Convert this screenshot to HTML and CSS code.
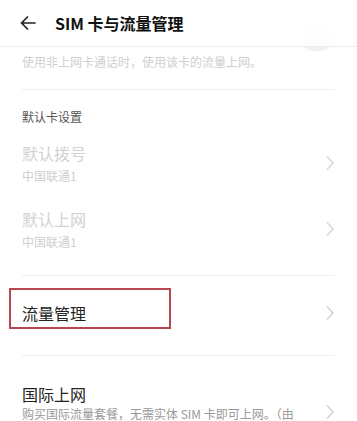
FILE: index.html
```html
<!DOCTYPE html>
<html lang="zh-CN">
<head>
<meta charset="utf-8">
<title>SIM 卡与流量管理</title>
<link rel="stylesheet" href="styles.css">
</head>
<body>
<div class="screen">
  <header class="topbar">
    <svg class="back" width="16" height="14" viewBox="0 0 16 14"><path d="M15 7H1.5M7.5 1L1.5 7l6 6" fill="none" stroke="#222" stroke-width="1.7" stroke-linecap="round" stroke-linejoin="round"/></svg>
    <h1 class="title">SIM 卡与流量管理</h1>
  </header>
  <main class="content">
    <section class="group first">
      <div class="row-top">
        <div class="texts">
          <div class="spacer"></div>
          <div class="sub faint">使用非上网卡通话时，使用该卡的流量上网。</div>
        </div>
        <div class="toggle"></div>
      </div>
    </section>
    <section class="group defaults">
      <div class="caption">默认卡设置</div>
      <div class="row">
        <div class="texts">
          <div class="name disabled">默认拨号</div>
          <div class="sub faint">中国联通1</div>
        </div>
        <svg class="chev" width="8" height="16" viewBox="0 0 8 16"><path d="M1 1.5L7 8l-6 6.5" fill="none" stroke="#d4d4d4" stroke-width="1.3"/></svg>
      </div>
      <div class="row">
        <div class="texts">
          <div class="name disabled">默认上网</div>
          <div class="sub faint">中国联通1</div>
        </div>
        <svg class="chev" width="8" height="16" viewBox="0 0 8 16"><path d="M1 1.5L7 8l-6 6.5" fill="none" stroke="#d4d4d4" stroke-width="1.3"/></svg>
      </div>
    </section>
    <section class="group">
      <div class="row single">
        <div class="texts">
          <div class="name">流量管理</div>
        </div>
        <svg class="chev" width="8" height="16" viewBox="0 0 8 16"><path d="M1 1.5L7 8l-6 6.5" fill="none" stroke="#cfcfcf" stroke-width="1.3"/></svg>
        <div class="highlight"></div>
      </div>
    </section>
    <section class="group last">
      <div class="row intl">
        <div class="texts narrow">
          <div class="name tight">国际上网</div>
          <div class="sub gray">购买国际流量套餐，无需实体 SIM 卡即可上网。（由运营商提供服务）</div>
        </div>
        <svg class="chev" width="8" height="16" viewBox="0 0 8 16"><path d="M1 1.5L7 8l-6 6.5" fill="none" stroke="#cfcfcf" stroke-width="1.3"/></svg>
      </div>
    </section>
  </main>
</div>
</body>
</html>
```
FILE: styles.css
```css
html, body {
  margin: 0;
  padding: 0;
  background: #fff;
}
body {
  font-family: "Noto Sans CJK SC", "Noto Sans", sans-serif;
  color: #222;
}
.screen {
  position: relative;
  width: 357px;
  height: 421px;
  overflow: hidden;
  background: #fff;
}
.topbar {
  position: absolute;
  top: 0;
  left: 0;
  right: 0;
  height: 46px;
  z-index: 2;
  background: rgba(255, 255, 255, 0.93);
  border-bottom: 1px solid #eeeeee;
  display: flex;
  align-items: center;
  padding-left: 20px;
}
.back {
  display: block;
}
.title {
  margin: 0 0 0 19px;
  font-size: 16px;
  font-weight: 700;
  color: #111;
  line-height: 22px;
}
.content {
  display: flex;
  flex-direction: column;
}
.group {
  margin: 0 22px;
  border-bottom: 1px solid #eeeeee;
}
.group.last {
  border-bottom: none;
}
.row-top {
  display: flex;
  align-items: flex-start;
  justify-content: space-between;
  padding: 25px 0 18px;
}
.spacer {
  height: 22px;
  margin-bottom: 4px;
}
.toggle {
  width: 32px;
  height: 26px;
  border-radius: 13px;
  background: #f1f1f1;
  margin-right: 2px;
}
.caption {
  padding-top: 18px;
  margin-bottom: 4px;
  font-size: 12px;
  line-height: 18px;
  color: #555;
}
.row {
  position: relative;
  display: flex;
  align-items: center;
  justify-content: space-between;
  padding: 11px 0;
}
.group.defaults {
  padding-bottom: 13px;
}
.texts {
  display: flex;
  flex-direction: column;
}
.texts.narrow {
  width: 282px;
}
.name {
  font-size: 16px;
  line-height: 24px;
  color: #222;
}
.name.tight {
  line-height: 22px;
}
.name.disabled {
  color: #d2d2d2;
}
.sub {
  font-size: 12px;
  line-height: 18px;
  margin-top: 2px;
}
.sub.faint {
  color: #cfcfcf;
}
.sub.gray {
  color: #999;
  margin-top: 0;
}
.row.single {
  padding: 25px 0 30px;
}
.row.intl {
  padding: 27px 0 10px;
  align-items: center;
}
.chev {
  display: block;
  flex-shrink: 0;
  margin-right: 1px;
}
.highlight {
  position: absolute;
  left: -13px;
  top: 12px;
  width: 158px;
  height: 37px;
  border: 2px solid #b8464f;
  pointer-events: none;
}
```
